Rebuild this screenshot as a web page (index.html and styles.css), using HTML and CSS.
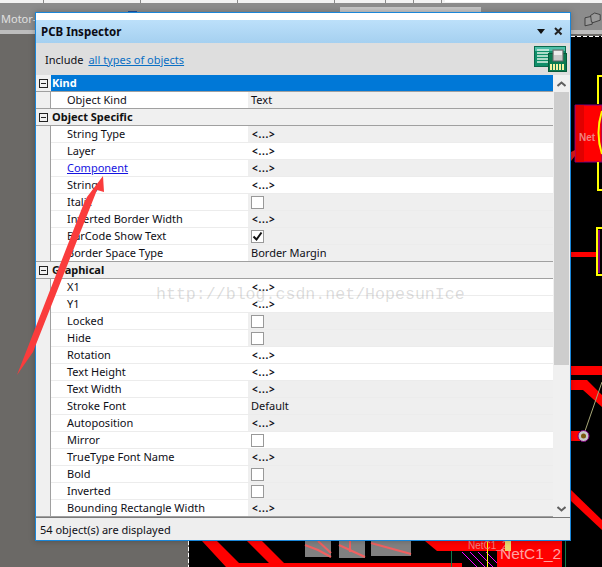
FILE: index.html
```html
<!DOCTYPE html>
<html lang="en">
<head>
<meta charset="utf-8">
<title>PCB Inspector</title>
<link rel="stylesheet" href="styles.css">
</head>
<body>
<div class="desktop">
  <svg class="pcb" width="602" height="567" viewBox="0 0 602 567">
    <rect x="0" y="0" width="602" height="3" fill="#f2f2f2"/>
    <rect x="0" y="3" width="602" height="27" fill="#8c8c8c"/>
    <rect x="0" y="30" width="602" height="4" fill="#bdbdbd"/>
    <rect x="340" y="7" width="141" height="6" fill="#c6c6c6"/>
    <rect x="0" y="34" width="602" height="533" fill="#6b6966"/>
    <g fill="#8a8a8a">
      <rect x="43" y="0" width="1" height="3"/><rect x="140" y="0" width="1" height="3"/>
      <rect x="237" y="0" width="1" height="3"/><rect x="334" y="0" width="1" height="3"/>
      <rect x="385" y="0" width="1" height="3"/><rect x="413" y="0" width="1" height="3"/>
      <rect x="441" y="0" width="1" height="3"/>
    </g>
    <rect x="445" y="0" width="135" height="2" fill="#ffffff"/>
    <text class="tab-text" x="1" y="23">Motor-</text>
    <rect x="128" y="11" width="9" height="2" fill="#1f4f9e"/>
    <rect x="571" y="36" width="31" height="531" fill="#000000"/>
    <rect x="189" y="541" width="413" height="26" fill="#000000"/>
    <line x1="571" y1="36.500" x2="602" y2="36.500" stroke="#ffffff" stroke-dasharray="4 2"/>
    <line x1="188.500" y1="541" x2="188.500" y2="567" stroke="#ffffff" stroke-dasharray="4 2"/>
    <g transform="translate(585 13) scale(0.8)" fill="#9a9a9a" stroke="#2e2e2e">
      <path d="M0 6 L9 4 L9 14 L0 16 Z"/>
      <path d="M7 3 L12 0 L19 2 L19 9 L10 12 L8 11 Z"/>
    </g>
    <path d="M575 105 H602 V162 H575 Z" fill="#ff0000" stroke="#800080"/>
    <rect x="576" y="105" width="8" height="57" fill="#e00000"/>
    <text class="pad-text" x="579" y="141">Net</text>
    <path d="M602 111 Q595 133 602 154" fill="none" stroke="#ffff00" stroke-width="2"/>
    <path d="M602 76 H598 V104 M598 162 V190 H602" fill="none" stroke="#ffff00" stroke-width="2"/>
    <rect x="571" y="252" width="31" height="5" fill="#ff0000"/>
    <path d="M602 228 H597 V275 H602" fill="#000000" stroke="#ffff00" stroke-width="2"/>
    <path d="M599 230 V273" stroke="#ff00ff" stroke-width="1"/>
    <path d="M571 152 L575 150 L575 156 L571 161 Z" fill="#d81818"/>
    <rect x="571" y="366" width="31" height="9" fill="#ff0000"/>
    <path d="M571 380 H587 L602 395 V407 L583 390 H571 Z" fill="#ff0000"/>
    <rect x="571" y="431" width="12" height="10" fill="#ff0000"/>
    <line x1="584" y1="434" x2="602" y2="382" stroke="#a8a878"/>
    <circle cx="583.500" cy="436" r="5.500" fill="#c8c8c8" stroke="#800080"/>
    <circle cx="583.500" cy="436" r="2.500" fill="#7a5a10"/>
    <path d="M571 490 L602 520 V530 L571 501 Z" fill="#ff0000"/>
    <path d="M202 541 H217 L239 563 H269 L247 541 H262 L284 563 H477 V567 H226 Z" fill="#ff0000"/>
    <rect x="305" y="541" width="26" height="16" fill="#808080"/>
    <path d="M305 545 L318 550 L331 557 M318 541 L331 553" stroke="#f06060" stroke-width="2" fill="none"/>
    <rect x="339" y="541" width="26" height="17" fill="#808080"/>
    <path d="M339 545 L365 557 M350 541 L350 552" stroke="#f06060" stroke-width="2" fill="none"/>
    <rect x="371" y="541" width="40" height="15" fill="#808080"/>
    <path d="M371 543 L411 554" stroke="#f06060" stroke-width="2" fill="none"/>
    <path d="M425 541 H562 V551 H437 Z" fill="#ff0000"/>
    <rect x="451" y="551" width="1" height="16" fill="#0f7a4a"/>
    <rect x="565" y="541" width="1" height="26" fill="#0f7a4a"/>
    <rect x="462" y="551" width="35" height="16" fill="#000000"/>
    <path d="M462 552 L477 567 M470 552 L485 567 M478 552 L493 567 M486 552 L497 563" stroke="#ff00ff"/>
    <rect x="497" y="541" width="65" height="26" fill="#ff0000"/>
    <rect x="487" y="541" width="1" height="26" fill="#ffff00"/>
    <text class="net-small" x="468" y="549">NetC1_2</text>
    <text class="net-big" x="500" y="559">NetC1_2</text>
    <rect x="505" y="541" width="6" height="10" fill="#e8d870"/>
  </svg>

  <section class="window">
    <div class="strip"></div>
    <header class="title">
      <span class="title-text">PCB Inspector</span>
      <svg class="title-menu" width="9" height="6" viewBox="0 0 9 6"><path d="M0 0 H8 L4 5 Z" fill="#111111"/></svg>
      <svg class="title-close" width="9" height="9" viewBox="0 0 9 9"><path d="M1 1 L7.500 7.500 M7.500 1 L1 7.500" stroke="#222222" stroke-width="2"/></svg>
    </header>
    <div class="toolbar">
      <span>Include</span>
      <a class="link" href="#">all types of objects</a>
      <svg class="board" width="33" height="26" viewBox="0 0 33 26">
        <rect x="0.500" y="0.500" width="31" height="20" fill="#0f8f6a" stroke="#0a6a4c"/>
        <rect x="1" y="1" width="30" height="4" fill="#4fbfa8"/>
        <path d="M3 4 H15 M3 7 H15 M3 10 H15 M3 13 H15 M3 16 H15" stroke="#dff5e8" stroke-width="1.500"/>
        <rect x="14.500" y="7.500" width="18" height="18" fill="#0a7a50" stroke="#075a3a"/>
        <rect x="19" y="4" width="10" height="11" fill="#c9c9c9" stroke="#666666"/>
        <rect x="20" y="5" width="8" height="4" fill="#ededed"/>
        <path d="M17 18 V24 M20 18 V24 M23 18 V24 M26 18 V24 M29 18 V24" stroke="#f6f2a0" stroke-width="2"/>
      </svg>
    </div>
    <div class="main">
      <div class="grid">
        <div class="sec">
          <div class="hdr hdr-on"><span class="tog"></span><span class="hdr-text">Kind</span></div>
          <div class="body">
            <div class="row"><div class="nm">Object Kind</div><div class="val alt">Text</div></div>
          </div>
        </div>
        <div class="sec">
          <div class="hdr"><span class="tog"></span><span class="hdr-text">Object Specific</span></div>
          <div class="body">
            <div class="row"><div class="nm">String Type</div><div class="val alt"><span class="multi">&lt;...&gt;</span></div></div>
            <div class="row"><div class="nm">Layer</div><div class="val"><span class="multi">&lt;...&gt;</span></div></div>
            <div class="row"><div class="nm"><a class="prop-link" href="#">Component</a></div><div class="val alt"><span class="multi">&lt;...&gt;</span></div></div>
            <div class="row"><div class="nm">String</div><div class="val"><span class="multi">&lt;...&gt;</span></div></div>
            <div class="row"><div class="nm">Italic</div><div class="val alt"><span class="chk"></span></div></div>
            <div class="row"><div class="nm">Inverted Border Width</div><div class="val alt"><span class="multi">&lt;...&gt;</span></div></div>
            <div class="row"><div class="nm">BarCode Show Text</div><div class="val alt"><span class="chk"><svg width="11" height="11" viewBox="0 0 11 11"><path d="M1.500 5.500 L4.500 8.500 L9.500 1.500" fill="none" stroke="#111111" stroke-width="2"/></svg></span></div></div>
            <div class="row"><div class="nm">Border Space Type</div><div class="val alt">Border Margin</div></div>
          </div>
        </div>
        <div class="sec">
          <div class="hdr"><span class="tog"></span><span class="hdr-text">Graphical</span></div>
          <div class="body">
            <div class="row"><div class="nm">X1</div><div class="val"><span class="multi">&lt;...&gt;</span></div></div>
            <div class="row"><div class="nm">Y1</div><div class="val"><span class="multi">&lt;...&gt;</span></div></div>
            <div class="row"><div class="nm">Locked</div><div class="val alt"><span class="chk"></span></div></div>
            <div class="row"><div class="nm">Hide</div><div class="val alt"><span class="chk"></span></div></div>
            <div class="row"><div class="nm">Rotation</div><div class="val"><span class="multi">&lt;...&gt;</span></div></div>
            <div class="row"><div class="nm">Text Height</div><div class="val"><span class="multi">&lt;...&gt;</span></div></div>
            <div class="row"><div class="nm">Text Width</div><div class="val alt"><span class="multi">&lt;...&gt;</span></div></div>
            <div class="row"><div class="nm">Stroke Font</div><div class="val alt">Default</div></div>
            <div class="row"><div class="nm">Autoposition</div><div class="val alt"><span class="multi">&lt;...&gt;</span></div></div>
            <div class="row"><div class="nm">Mirror</div><div class="val"><span class="chk"></span></div></div>
            <div class="row"><div class="nm">TrueType Font Name</div><div class="val alt"><span class="multi">&lt;...&gt;</span></div></div>
            <div class="row"><div class="nm">Bold</div><div class="val alt"><span class="chk"></span></div></div>
            <div class="row"><div class="nm">Inverted</div><div class="val alt"><span class="chk"></span></div></div>
            <div class="row"><div class="nm">Bounding Rectangle Width</div><div class="val alt"><span class="multi">&lt;...&gt;</span></div></div>
          </div>
        </div>
      </div>
      <div class="scroll">
        <div class="scroll-btn"><svg width="9" height="6" viewBox="0 0 9 6"><path d="M0.500 5 L4.500 1.500 L8.500 5" fill="none" stroke="#606060" stroke-width="2"/></svg></div>
        <div class="thumb"></div>
        <div class="scroll-rest"></div>
        <div class="scroll-btn"><svg width="9" height="6" viewBox="0 0 9 6"><path d="M0.500 1 L4.500 4.500 L8.500 1" fill="none" stroke="#606060" stroke-width="2"/></svg></div>
      </div>
    </div>
    <footer class="status">54 object(s) are displayed</footer>
  </section>

  <svg class="arrow" width="602" height="567" viewBox="0 0 602 567">
    <path d="M17 375 L84 203 L87 197 L103 176 L104 192 L97 190 L33 352 Z" fill="#fa3c3c"/>
  </svg>
  <div class="watermark">http://blog.csdn.net/HopesunIce</div>
</div>
</body>
</html>
```
FILE: styles.css
```css
html, body {
  margin: 0;
  padding: 0;
  background: #6b6966;
}
.desktop {
  position: relative;
  width: 602px;
  height: 567px;
  overflow: hidden;
  font-family: "Noto Sans", "Open Sans", sans-serif;
  font-size: 11px;
  color: #0e0e16;
}
.pcb, .arrow {
  position: absolute;
  left: 0;
  top: 0;
  display: block;
}
.arrow { pointer-events: none; }
.tab-text { font: 11px "Noto Sans", sans-serif; fill: #e0e0e0; }
.pad-text { font: bold 10px "Liberation Sans", sans-serif; fill: #f08080; }
.net-small { font: 10px "Liberation Sans", sans-serif; fill: #f08080; }
.net-big { font: 15.500px "Liberation Sans", sans-serif; fill: #ffa0a0; }

.window {
  position: absolute;
  left: 35px;
  top: 12px;
  width: 534px;
  height: 527px;
  border: 1px solid #1a86d8;
  background: #f0f0f0;
  display: flex;
  flex-direction: column;
  box-shadow: 0 0 6px rgba(0, 0, 0, 0.25);
}
.strip { height: 7px; background: #ffffff; flex: none; }
.title {
  height: 23px;
  flex: none;
  display: flex;
  align-items: center;
  padding: 0 7px 0 5px;
  background: linear-gradient(#bce0fa, #a5d0f0);
}
.title-text {
  flex: 1;
  font-size: 11.500px;
  font-weight: 700;
  color: #0c0c14;
}
.title-menu { margin-right: 8px; }
.toolbar {
  height: 32px;
  flex: none;
  display: flex;
  align-items: center;
  gap: 5px;
  padding: 0 3px 0 9px;
  background: #dedede;
  box-sizing: border-box;
}
.link { color: #0a6fc4; text-decoration: underline; }
.board { margin-left: auto; }
.main {
  height: 442px;
  flex: none;
  display: flex;
  overflow: hidden;
}
.grid {
  width: 517px;
  flex: none;
  overflow: hidden;
}
.sec { border-bottom: 1px solid #a0a0a0; }
.hdr {
  height: 16px;
  display: flex;
  align-items: center;
  border-bottom: 1px solid #a0a0a0;
  background: #f0f0f0;
}
.tog {
  width: 7px;
  height: 7px;
  border: 1px solid #222222;
  margin: 0 3px;
  flex: none;
  background: linear-gradient(#222222, #222222) center / 5px 1px no-repeat;
}
.hdr-text {
  flex: 1;
  height: 16px;
  line-height: 15px;
  padding-left: 1px;
  font-weight: 700;
  color: #111111;
}
.hdr-on .hdr-text {
  background: #0078d7;
  color: #ffffff;
}
.body {
  margin-left: 14px;
  border-left: 1px solid #a0a0a0;
}
.row {
  display: flex;
  height: 17px;
  box-sizing: border-box;
  border-bottom: 1px solid #ececec;
  line-height: 16px;
}
.row:last-child {
  height: 16px;
  border-bottom: 0;
}
.nm {
  width: 197px;
  flex: none;
  box-sizing: border-box;
  padding-left: 16px;
  background: #ffffff;
  white-space: nowrap;
  overflow: hidden;
}
.val {
  flex: 1;
  padding-left: 3px;
  background: #ffffff;
  display: flex;
  align-items: center;
}
.val.alt { background: #efefef; }
.multi { font-size: 10px; font-weight: 700; letter-spacing: 0.7px; margin-left: 1px; }
.prop-link { color: #1414e0; text-decoration: underline; }
.chk {
  width: 11px;
  height: 11px;
  border: 1px solid #999999;
  background: #ffffff;
  display: block;
}
.chk svg { display: block; }
.scroll {
  width: 17px;
  flex: none;
  display: flex;
  flex-direction: column;
  background: #f0f0f0;
}
.scroll-btn {
  height: 17px;
  flex: none;
  display: flex;
  align-items: center;
  justify-content: center;
}
.thumb {
  height: 273px;
  flex: none;
  margin: 0 1px;
  background: #cdcdcd;
}
.scroll-rest { flex: 1; }
.status {
  height: 22px;
  flex: none;
  border-top: 1px solid #7a7a7a;
  background: #eeeeee;
  line-height: 23px;
  padding-left: 4px;
}
.watermark {
  position: absolute;
  left: 156px;
  top: 285px;
  font-family: "Liberation Mono", monospace;
  font-size: 16.600px;
  color: rgba(120, 120, 120, 0.26);
  white-space: nowrap;
  pointer-events: none;
}
```
